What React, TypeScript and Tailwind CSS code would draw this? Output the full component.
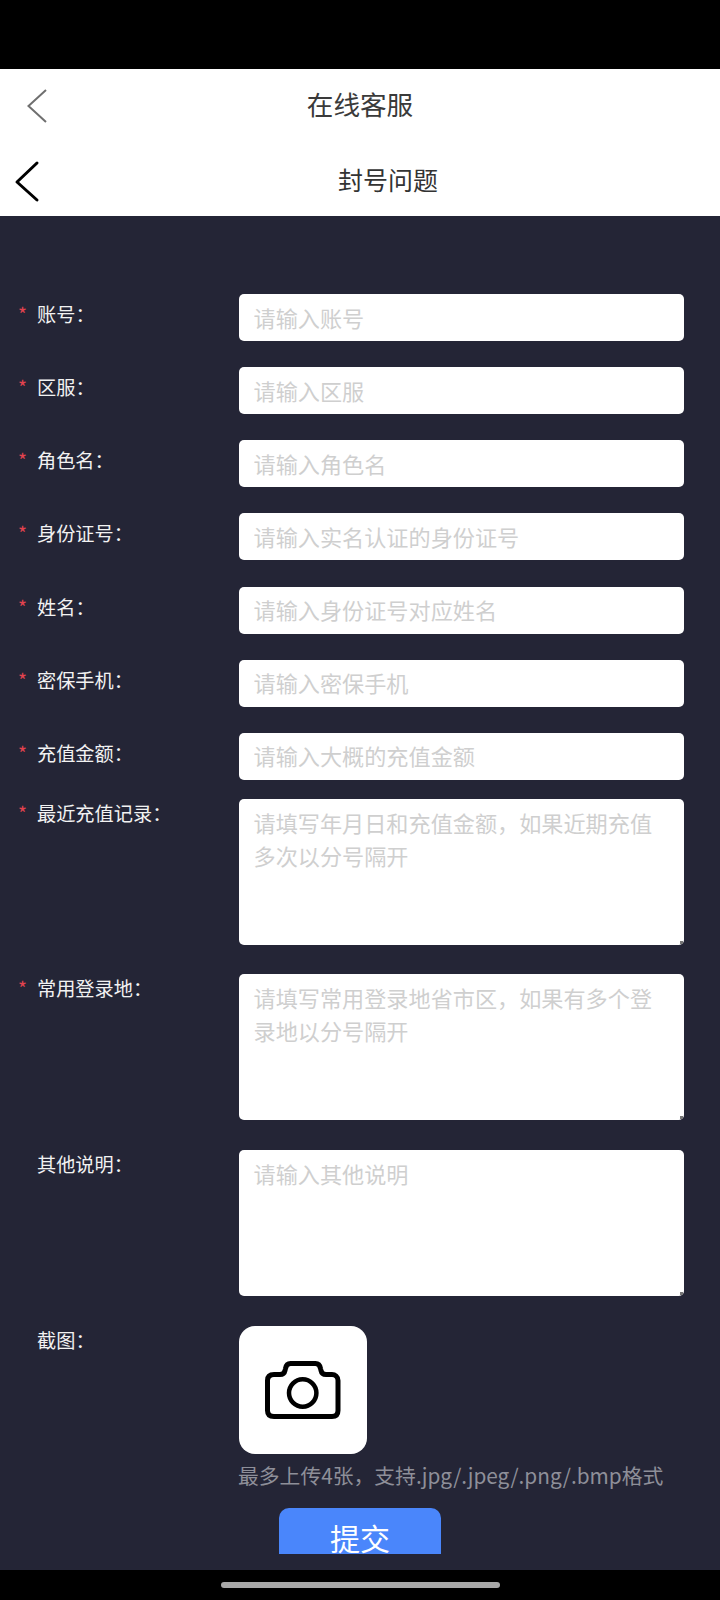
const FONT = "font-['Noto_Sans_CJK_SC','Noto_Sans',sans-serif]";

const Label: React.FC<{ text: string; required?: boolean }> = ({ text, required }) => (
  <div className="flex w-[239px] shrink-0 pl-[18px] text-[19.2px] leading-[26px] text-[#f2f2f2]">
    <span className="w-[19px] text-[#e2434f]">{required ? "*" : ""}</span>
    <span>{text}：</span>
  </div>
);

const InputRow: React.FC<{ label: string; placeholder: string }> = ({ label, placeholder }) => (
  <div className="flex items-start">
    <div className="pt-[7px]">
      <Label text={label} required />
    </div>
    <input
      placeholder={placeholder}
      className="h-[47px] w-[445px] rounded-[5px] bg-white pl-[14.5px] pr-[15px] pb-[2px] text-[22.15px] outline-none placeholder:text-[#cfcfcf]"
    />
  </div>
);

const TextareaRow: React.FC<{ label: string; placeholder: string; required?: boolean }> = ({ label, placeholder, required }) => (
  <div className="flex items-start">
    <div className="pt-[1px]">
      <Label text={label} required={required} />
    </div>
    <div className="relative">
      <textarea
        placeholder={placeholder}
        className="block h-[146px] w-[445px] resize-none rounded-[5px] bg-white pl-[14.5px] pr-[15px] pt-[7px] text-[22.15px] leading-[33px] outline-none placeholder:text-[#cfcfcf]"
      />
      <span className="absolute bottom-[1px] right-[1px] h-[3px] w-[3px] bg-[#777]" />
    </div>
  </div>
);

const App: React.FC = () => {
  return (
    <div className={`flex h-[1600px] w-[720px] flex-col overflow-hidden bg-black ${FONT}`}>
      <div className="h-[69px] shrink-0 bg-black" />

      <div className="relative flex h-[75px] shrink-0 items-center justify-center bg-white pb-[5px]">
        <svg className="absolute left-[26px] top-[18px]" width="22" height="38" viewBox="0 0 22 38" fill="none" stroke="#6f6f6f" strokeWidth="2" aria-hidden="true">
          <path d="M20 3 2.5 19 20 35" />
        </svg>
        <span className="text-[26.6px] text-[#3a3a3a]">在线客服</span>
      </div>

      <div className="relative flex h-[72px] shrink-0 items-center justify-center bg-white pl-[56px]">
        <svg className="absolute left-[14px] top-[13px]" width="26" height="50" viewBox="0 0 26 50" fill="none" stroke="#000" strokeWidth="3" strokeLinecap="round" strokeLinejoin="round" aria-hidden="true">
          <path d="M23 6 3 25l20 18" />
        </svg>
        <span className="text-[25px] text-[#333]">封号问题</span>
      </div>

      <main className="flex-1 bg-[#242536]">
        <div className="h-[1338px] overflow-hidden pt-[78px]">
          <div className="flex flex-col gap-[26.15px]">
            <InputRow label="账号" placeholder="请输入账号" />
            <InputRow label="区服" placeholder="请输入区服" />
            <InputRow label="角色名" placeholder="请输入角色名" />
            <InputRow label="身份证号" placeholder="请输入实名认证的身份证号" />
            <InputRow label="姓名" placeholder="请输入身份证号对应姓名" />
            <InputRow label="密保手机" placeholder="请输入密保手机" />
            <InputRow label="充值金额" placeholder="请输入大概的充值金额" />
          </div>

          <div className="mt-[19px] flex flex-col gap-[29.5px]">
            <TextareaRow label="最近充值记录" placeholder="请填写年月日和充值金额，如果近期充值多次以分号隔开" required />
            <TextareaRow label="常用登录地" placeholder="请填写常用登录地省市区，如果有多个登录地以分号隔开" required />
            <TextareaRow label="其他说明" placeholder="请输入其他说明" />
          </div>

          <div className="mt-[30px] flex items-start">
            <div className="pt-[1px]">
              <Label text="截图" />
            </div>
            <div>
              <div className="flex h-[128px] w-[128px] items-center justify-center rounded-[16px] bg-white">
                <svg width="76" height="58" viewBox="0 0 76 58" fill="none" stroke="#000" strokeWidth="5" strokeLinejoin="round" aria-hidden="true">
                  <path d="M9 13.5h6c3 0 4.5-1.5 5-4l.5-2c.5-3 2-5 5-5h25c3 0 4.5 2 5 5l.5 2c.5 2.5 2 4 5 4h6c3 0 6 2 6 6v30c0 4-2 6-6 6H9c-4 0-6.5-2-6.5-6v-30c0-4 2.5-6 6.5-6Z" />
                  <circle cx="37.7" cy="32" r="13.7" strokeWidth="4.5" />
                </svg>
              </div>
              <p className="-ml-[1px] mt-[6px] whitespace-nowrap text-[20.8px] leading-[30px] text-[#8e8f99]">最多上传4张，支持.jpg/.jpeg/.png/.bmp格式</p>
            </div>
          </div>

          <div className="mt-[18px] flex justify-center">
            <button className="h-[60px] w-[162px] rounded-[10px] bg-[#4a86fb] text-[30px] text-white">提交</button>
          </div>
        </div>
      </main>

      <div className="flex h-[30px] shrink-0 items-center justify-center bg-black">
        <div className="h-[6px] w-[279px] rounded-full bg-[#a8a8a8]" />
      </div>
    </div>
  );
};

export default App;
